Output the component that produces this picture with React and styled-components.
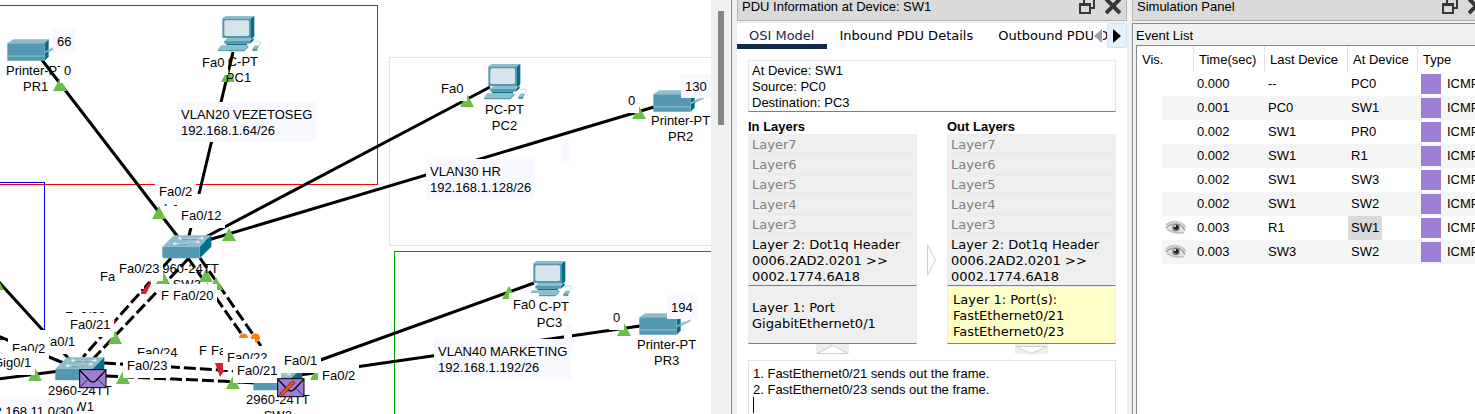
import React from "react";
import styled, { createGlobalStyle, css } from "styled-components";

const GlobalStyle = createGlobalStyle`
  *, *::before, *::after { box-sizing: border-box; }
  body {
    margin: 0;
    overflow: hidden;
    background: #f0f0f0;
    color: #000;
    font: 13px/16px "Liberation Sans", Arial, sans-serif;
  }
  button { font: inherit; color: inherit; border: 0; padding: 0; background: none; }
`;

const wide = css`
  font-family: "DejaVu Sans", Verdana, sans-serif;
`;

const Window = styled.div`
  display: flex;
  height: 100vh;
  overflow: hidden;
`;

/* ---------- Workspace ---------- */

const Workspace = styled.main`
  display: flex;
  flex: 1;
  min-width: 0;
  border-right: 1px solid #84848f;
`;

const Canvas = styled.div`
  position: relative;
  flex: 1;
  min-width: 0;
  overflow: hidden;
  background: #fff;
`;

const Drawing = styled.svg`
  position: absolute;
  left: 0;
  top: 0;
  width: 100%;
  height: 100%;
`;

const Gutter = styled.div`
  width: 20px;
  padding: 11px 7px;
`;

const Thumb = styled.div`
  height: 114px;
  background: #858585;
`;

const Placed = styled.div`
  position: absolute;
  left: ${(p) => p.$x}px;
  top: ${(p) => p.$y}px;
  white-space: pre;
`;

const Caption = styled(Placed)`
  text-align: center;
`;

const Port = styled(Placed)`
  padding: 4px;
  background: #fff;
  height: ${(p) => (p.$h ? `${p.$h}px` : "auto")};
  overflow: hidden;
`;

const Note = styled(Placed)`
  padding: 5px 4px 3px;
  min-height: 24px;
  background: #f8f9ff;
`;

const Sprite = styled.svg`
  position: absolute;
  left: ${(p) => p.$x}px;
  top: ${(p) => p.$y}px;
`;

const solidLinks = [
  [42, 60, 178, 237],
  [233, 52, 188, 240],
  [490, 87, 200, 240],
  [654, 107, 205, 241],
  [534, 283, 290, 371],
  [640, 326, 300, 375],
  [-2, 281, 70, 360],
  [-2, 336, 66, 364],
  [-2, 379, 60, 371],
  [238, 382, 256, 383],
];

const dashedLinks = [
  [171, 258, 83, 357],
  [189, 258, 94, 358],
  [188, 258, 243, 336],
  [200, 258, 261, 346],
  [104, 363, 236, 371],
  [106, 376, 240, 382],
];

const upMarks = [
  [60, 78], [228, 69], [159, 206], [229, 228], [467, 94], [639, 106], [509, 286],
  [624, 323], [-3, 277], [35, 368], [115, 331], [123, 371], [163, 271], [206, 269],
  [216, 277], [233, 376], [317, 367],
];

const captions = [
  [6, 63, "Printer-PT\nPR1"],
  [219, 54, "PC-PT\nPC1"],
  [485, 102, "PC-PT\nPC2"],
  [651, 113, "Printer-PT\nPR2"],
  [530, 299, "PC-PT\nPC3"],
  [637, 337, "Printer-PT\nPR3"],
  [48, 383, "2960-24TT\nSW1"],
  [155, 261, "2960-24TT\nSW3"],
  [246, 392, "2960-24TT\nSW2"],
];

const ports = [
  [60, 59, "0"],
  [198, 51, "Fa0"],
  [437, 77, "Fa0"],
  [624, 89, "0"],
  [509, 293, "Fa0"],
  [609, 306, "0"],
  [160, 196, "Fa0/12", 10],
  [177, 194, " ".repeat(12), 10],
  [155, 180, "Fa0/2"],
  [177, 204, "Fa0/12"],
  [96, 265, "Fa0/24"],
  [115, 257, "Fa0/23"],
  [157, 284, "Fa0/24"],
  [169, 284, "Fa0/20"],
  [61, 305, "Fa0/22"],
  [66, 313, "Fa0/21"],
  [38, 330, "Fa0/1"],
  [8, 337, "Fa0/2"],
  [-11, 351, "Gig0/1"],
  [133, 341, "Fa0/24"],
  [123, 354, "Fa0/23"],
  [195, 339, "Fa0/24"],
  [207, 339, "Fa0/20"],
  [223, 346, "Fa0/22"],
  [233, 359, "Fa0/21"],
  [280, 349, "Fa0/1"],
  [318, 364, "Fa0/2"],
];

const notes = [
  [53, 29, "66"],
  [177, 102, "VLAN20 VEZETOSEG\n192.168.1.64/26"],
  [681, 74, "130"],
  [561, 139, ""],
  [426, 159, "VLAN30 HR\n192.168.1.128/26"],
  [667, 295, "194"],
  [564, 325, ""],
  [434, 339, "VLAN40 MARKETING\n192.168.1.192/26"],
  [-24, 399, "192.168.11.0/30"],
];

const Computer = ({ x, y }) => (
  <Sprite $x={x} $y={y} width="44" height="37" viewBox="0 0 132 111" aria-hidden="true">
    <path d="M16 10 26 3H112L102 10Z" fill="#8fbccb" />
    <path d="M102 10 112 3V63L102 76Z" fill="#046f8a" />
    <path d="M16 10H102V69H16Z" fill="#5599b0" />
    <rect x="22" y="16" width="74" height="47" rx="5" fill="#d5e5eb" />
    <path d="M30 69H104L98 78H22Z" fill="#8fbccb" />
    <path d="M22 78H98V86H22Z" fill="#5599b0" />
    <path d="M98 78 110 69V76L98 86Z" fill="#046f8a" />
    <path d="M28 86H90V91H28Z" fill="#046f8a" />
    <path d="M12 91H94L82 104H3Z" fill="#8fbccb" />
    <path d="M3 104H82V109H3Z M82 104 94 91V97L82 109Z" fill="#5599b0" />
    <path d="M106 102 114 92H126L121 102V108H106Z" fill="#5599b0" />
    <path d="M106 101 114 92H126L118 101Z" fill="#8fbccb" />
    <path d="M110 80Q132 74 130 84T119 91" fill="none" stroke="#c4dde5" strokeWidth="3" />
  </Sprite>
);

const Printer = ({ x, y }) => (
  <Sprite $x={x} $y={y} width="54" height="22" viewBox="0 0 162 66" aria-hidden="true">
    <path d="M112 38 158 18 152 26 112 46Z" fill="#8fbccb" />
    <path d="M1 13 19 1H125L113 13Z" fill="#8fbccb" />
    <path d="M113 13 125 1V53L113 65Z" fill="#046f8a" />
    <path d="M1 13H113V65H1Z" fill="#5599b0" />
    <path d="M1 51H113" stroke="#8fbccb" strokeWidth="3" />
    <path d="M113 38 140 23 134 32 113 43Z" fill="#8fbccb" />
  </Sprite>
);

const Switch = ({ x, y }) => (
  <Sprite $x={x} $y={y} width="50" height="24" viewBox="0 0 150 72" aria-hidden="true">
    <path d="M1 35 36 1H148L113 35Z" fill="#8fbccb" />
    <path d="M113 35 148 1V35L113 70Z" fill="#046f8a" />
    <path d="M1 35H113V70H1Z" fill="#5599b0" />
    <path d="M52 10H60M56 6 50 10 56 14M110 10H124M118 6 124 10 118 14M34 26H46M40 22 34 26 40 30M100 21H112M106 17 112 21 106 25" fill="none" stroke="#f2f8fa" strokeWidth="3" />
    <path d="M62 10H106M48 26H66L80 21H98" fill="none" stroke="#c4dde5" strokeWidth="2" />
    <path d="M62 13H80M50 29H70M88 13H104" stroke="#4a8ca2" strokeWidth="2" />
  </Sprite>
);

const Envelope = ({ x, y, sending }) => (
  <Sprite $x={x} $y={y} width="28" height="20" viewBox="0 0 84 60" aria-hidden="true">
    <rect x="2" y="2" width="79" height="54" fill="#9e7dd4" stroke="#000" strokeWidth="3" />
    <path d="M3 4 33 36Q41 42 50 36L80 4" fill="none" stroke="#000" strokeWidth="4" />
    <path d="M4 54 26 32M80 54 58 32" fill="none" stroke="#000" strokeWidth="2" />
    {sending && <path d="M9 46 47 8 54 14 17 53Z" fill="#ff4b0a" stroke="#222" strokeWidth="2" />}
  </Sprite>
);

const Topology = () => (
  <Canvas>
    <Drawing aria-hidden="true">
      <g fill="none" shapeRendering="crispEdges">
        <rect x="-10" y="5.5" width="387" height="179" stroke="#f00" />
        <path d="M0 182.5H44.5V339.5H0" stroke="#00f" />
        <path d="M2000 57.5H389.5V245.5H2000" stroke="#ff0" />
        <path d="M2000 251.5H394.5V2000" stroke="#00a000" />
      </g>
      <g stroke="#000" strokeWidth="3">
        {solidLinks.map(([a, b, c, d], i) => <line key={i} x1={a} y1={b} x2={c} y2={d} />)}
      </g>
      <g stroke="#000" strokeWidth="3" strokeDasharray="12 4">
        {dashedLinks.map(([a, b, c, d], i) => <line key={i} x1={a} y1={b} x2={c} y2={d} />)}
      </g>
    </Drawing>
    <Computer x={217} y={15} />
    <Computer x={483} y={63} />
    <Computer x={528} y={260} />
    <Printer x={7} y={39} />
    <Printer x={653} y={90} />
    <Printer x={639} y={313} />
    <Switch x={162} y={235} />
    <Switch x={55} y={357} />
    <Switch x={253} y={367} />
    <Drawing aria-hidden="true">
      <g fill="#6bbf47">
        {upMarks.map(([x, y], i) => <path key={i} d={`M${x} ${y}l7 13h-14z`} />)}
      </g>
      <path d="M141 294V292L151 281V284L146 294ZM215 363H229L220 377ZM112 320H116L114 324Z" fill="#d3202f" />
      <path d="M239 338A4.500 4.500 0 0 1 248 338Z" fill="#ff7f0e" />
      <circle cx="255.500" cy="338" r="4.500" fill="#ff7f0e" />
    </Drawing>
    {captions.map(([x, y, text]) => <Caption key={text} $x={x} $y={y}>{text}</Caption>)}
    {ports.map(([x, y, text, h], i) => <Port key={i} $x={x} $y={y} $h={h}>{text}</Port>)}
    {notes.map(([x, y, text], i) => <Note key={i} $x={x} $y={y}>{text}</Note>)}
    <Envelope x={79} y={369} />
    <Envelope x={277} y={378} sending />
  </Canvas>
);

/* ---------- Docked panels ---------- */

const Dock = styled.section`
  display: flex;
  flex-direction: column;
  flex: none;
  width: ${(p) => p.$width}px;
  margin-left: 5px;
  overflow: hidden;
`;

const TitleBar = styled.header`
  display: flex;
  flex: none;
  width: ${(p) => p.$width};
  height: 21px;
  margin-bottom: 2px;
  padding: 0 5px 0 4px;
  background: #dadada;
  border: solid #b4b4b4;
  border-width: 0 1px 1px;
  line-height: 13px;
`;

const Title = styled.h2`
  flex: 1;
  margin: 0;
  font-size: 13px;
  font-weight: 400;
`;

const TitleButton = styled.button`
  width: 16px;
  height: 15px;
  margin-left: 10px;
  svg { display: block; }
`;

const DockTitle = ({ children, width = "auto" }) => (
  <TitleBar $width={width}>
    <Title>{children}</Title>
    <TitleButton aria-label="Float">
      <svg width="16" height="15" fill="none" stroke="#383838" strokeWidth="2">
        <path d="M5 3V0M5-1H15V8H12" />
        <path d="M1 4H11V13H1Z" />
        <path d="M0 5H12" />
      </svg>
    </TitleButton>
    <TitleButton aria-label="Close">
      <svg width="16" height="15" fill="none" stroke="#383838" strokeWidth="4">
        <path d="M1-1 15 13M15-1 1 13" />
      </svg>
    </TitleButton>
  </TitleBar>
);

const PduBody = styled.div`
  display: flex;
  flex-direction: column;
  flex: 1;
  background: #fff;
`;

const TabBar = styled.div`
  display: flex;
  position: relative;
  height: 26px;
  overflow: hidden;
`;

const Tab = styled.button`
  ${wide}
  flex: none;
  height: 26px;
  padding: 5px 13px 0 12px;
  white-space: nowrap;
  color: ${(p) => (p.$active ? "#14284b" : "#000")};
  border-bottom: 5px solid ${(p) => (p.$active ? "#14284b" : "transparent")};
`;

const TabScroll = styled.div`
  position: absolute;
  top: 0;
  right: 0;
  display: flex;
  gap: 4px;
`;

const ScrollButton = styled.button`
  display: grid;
  place-items: center;
  width: ${(p) => (p.$hot ? 20 : 10)}px;
  height: 25px;
  background: ${(p) => (p.$hot ? "#e5f1fb" : "#fff")};
  border: ${(p) => (p.$hot ? "1px solid #cce4f7" : "0")};
  border-radius: 2px;
`;

const PduContent = styled.div`
  display: flex;
  flex-direction: column;
  flex: 1;
  padding: 11px 11px 0;
`;

const Summary = styled.div`
  height: 52px;
  padding: 2px 3px 0;
  border: 1px solid #e5e5e5;
  border-bottom-color: #7f7f7f;
`;

const Layers = styled.div`
  display: grid;
  grid-template-columns: 1fr 30px 1fr;
  margin-top: 6px;
`;

const Stack = styled.div`
  display: flex;
  flex-direction: column;
`;

const StackTitle = styled.h3`
  margin: 0;
  height: 16px;
  font-size: 13px;
  line-height: 18px;
`;

const Layer = styled.button`
  ${wide}
  display: flex;
  align-items: center;
  height: ${(p) => p.$h}px;
  padding: 2px ${(p) => (p.$lit ? 5 : 3)}px 0;
  text-align: left;
  white-space: pre;
  color: ${(p) => (p.$idle ? "#808080" : "#000")};
  background: ${(p) => (p.$lit ? "#ffffc8" : "#efefef")};
  border: 1px solid #ebebeb;
  border-bottom-color: ${(p) => (p.$idle ? "#ebebeb" : "#7f7f7f")};
`;

const Across = styled.button`
  align-self: end;
  justify-self: center;
  width: 12px;
  height: 34px;
  margin-bottom: 77px;
`;

const StepButton = styled.button`
  align-self: center;
  width: 33px;
  height: 10px;
  background: #efefef;
  svg { display: block; }
`;

const LogBox = styled.div`
  position: relative;
  display: flex;
  flex: 1;
  margin-top: 6px;
`;

const Log = styled.textarea`
  flex: 1;
  padding: 5px 4px 0;
  border: 1px solid #dfe4ea;
  border-bottom: 0;
  background: #fff;
  font: inherit;
  resize: none;
  outline: 0;
  overflow: hidden;
`;

const Caret = styled.span`
  position: absolute;
  left: 5px;
  top: 37px;
  width: 1px;
  height: 16px;
  background: #000;
`;

const idleLayers = ["Layer7", "Layer6", "Layer5", "Layer4", "Layer3"];
const layer2 = "Layer 2: Dot1q Header\n0006.2AD2.0201 >>\n0002.1774.6A18";

const LayerStack = ({ title, port, lit, step, arrow }) => (
  <Stack>
    <StackTitle>{title}</StackTitle>
    {idleLayers.map((name) => <Layer key={name} $h={20} $idle>{name}</Layer>)}
    <Layer $h={52}>{layer2}</Layer>
    <Layer $h={58} $lit={lit}>{port}</Layer>
    <StepButton aria-label={step}>
      <svg width="33" height="10" fill="#fff" stroke="#d0d0d0">
        <path d={arrow} />
      </svg>
    </StepButton>
  </Stack>
);

const PduPanel = () => (
  <Dock $width={390}>
    <DockTitle>PDU Information at Device: SW1</DockTitle>
    <PduBody>
      <TabBar>
        <Tab $active>OSI Model</Tab>
        <Tab>Inbound PDU Details</Tab>
        <Tab>Outbound PDU Details</Tab>
        <TabScroll>
          <ScrollButton aria-label="Previous tabs">
            <svg width="8" height="14"><path d="M8 0V14L0 7Z" fill="#a0a0a0" /></svg>
          </ScrollButton>
          <ScrollButton $hot aria-label="Next tabs">
            <svg width="8" height="14"><path d="M0 0V14L8 7Z" fill="#000" /></svg>
          </ScrollButton>
        </TabScroll>
      </TabBar>
      <PduContent>
        <Summary>At Device: SW1<br />Source: PC0<br />Destination: PC3</Summary>
        <Layers>
          <LayerStack title="In Layers" port={"Layer 1: Port\nGigabitEthernet0/1"} step="Previous layer" arrow="M1 9.500 16.500 1.500 32 9.500Z" />
          <Across aria-label="Compare">
            <svg width="12" height="34" fill="none" stroke="#d0d0d0">
              <path d="M1.500 1.500V32.500L9.500 17Z" />
            </svg>
          </Across>
          <LayerStack title="Out Layers" port={"Layer 1: Port(s):\nFastEthernet0/21\nFastEthernet0/23"} lit step="Next layer" arrow="M1 2.500 16.500 9.500 32 2.500Z" />
        </Layers>
        <LogBox>
          <Log
            aria-label="Layer details"
            readOnly
            value={"1. FastEthernet0/21 sends out the frame.\n2. FastEthernet0/23 sends out the frame.\n"}
          />
          <Caret />
        </LogBox>
      </PduContent>
    </PduBody>
  </Dock>
);

const Group = styled.div`
  flex: 1;
  padding: 3px 0 0 3px;
  border: solid #8a8a8a;
  border-width: 1px 0 0 1px;
`;

const GroupTitle = styled.h3`
  margin: 0;
  height: 18px;
  line-height: 17px;
  font-size: 13px;
  font-weight: 400;
`;

const List = styled.div`
  height: 100%;
  background: #fff;
  border: solid #828790;
  border-width: 1px 0 0 1px;
`;

const Events = styled.table`
  width: 100%;
  table-layout: fixed;
  border-collapse: separate;
  border-spacing: 0;
`;

const Head = styled.th`
  width: ${(p) => p.$w};
  height: 26px;
  padding: 2px 0 0 5px;
  font-weight: 400;
  text-align: left;
  white-space: nowrap;
  border-right: 1px solid #e2e2e2;
  &:last-child { border-right: 0; }
`;

const Row = styled.tr`
  --stripe: #fff;
  &:nth-child(even) { --stripe: #f5f5f5; }
`;

const Cell = styled.td`
  height: 24px;
  padding: 0 0 0 ${(p) => (p.$picked ? 0 : 3)}px;
  background: var(--stripe);
  white-space: nowrap;
`;

const VisCell = styled(Cell)`
  padding: 0 0 0 25px;
  background: #fff;
`;

const Vis = styled.div`
  display: flex;
  align-items: center;
  height: 24px;
  padding-left: 3px;
  background: var(--stripe);
`;

const Picked = styled.span`
  display: block;
  width: fit-content;
  height: 24px;
  line-height: 24px;
  padding: 0 3px;
  border-radius: 2px;
  background: #d9d9d9;
`;

const TypeTag = styled.span`
  display: flex;
  align-items: center;
  gap: 6px;
  &::before {
    content: "";
    flex: none;
    width: 20px;
    height: 20px;
    background: #9e7dd4;
  }
`;

const Eye = () => (
  <svg width="21" height="16" viewBox="0 0 63 48" role="img" aria-label="Visible">
    <path d="M2 22Q14 4 34 8T61 26L56 40Q30 46 14 36Z" fill="#e2e2e2" />
    <path d="M2 15Q20 2 38 6T62 22" fill="none" stroke="#c4c4c4" strokeWidth="5" />
    <path d="M2 24Q18 10 36 12T59 32" fill="none" stroke="#999" strokeWidth="4" />
    <path d="M6 28Q24 42 58 38" fill="none" stroke="#bbb" strokeWidth="4" />
    <circle cx="33" cy="23" r="11" fill="#777" />
    <circle cx="34" cy="22" r="7" fill="#222" />
    <circle cx="30" cy="18" r="3" fill="#fff" />
  </svg>
);

const events = [
  ["0.000", "--", "PC0"],
  ["0.001", "PC0", "SW1"],
  ["0.002", "SW1", "PR0"],
  ["0.002", "SW1", "R1"],
  ["0.002", "SW1", "SW3"],
  ["0.002", "SW1", "SW2"],
  ["0.003", "R1", "SW1", true, true],
  ["0.003", "SW3", "SW2", true],
];

const SimulationPanel = () => (
  <Dock $width={343}>
    <DockTitle width="358px">Simulation Panel</DockTitle>
    <Group>
      <GroupTitle>Event List</GroupTitle>
      <List>
        <Events>
          <thead>
            <tr>
              <Head $w="57px">Vis.</Head>
              <Head $w="71px">Time(sec)</Head>
              <Head $w="83px">Last Device</Head>
              <Head $w="70px">At Device</Head>
              <Head $w="auto">Type</Head>
            </tr>
          </thead>
          <tbody>
            {events.map(([time, last, at, visible, picked], i) => (
              <Row key={i}>
                <VisCell><Vis>{visible && <Eye />}</Vis></VisCell>
                <Cell>{time}</Cell>
                <Cell>{last}</Cell>
                <Cell $picked={picked}>{picked ? <Picked>{at}</Picked> : at}</Cell>
                <Cell><TypeTag>ICMP</TypeTag></Cell>
              </Row>
            ))}
          </tbody>
        </Events>
      </List>
    </Group>
  </Dock>
);

export default function App() {
  return (
    <Window>
      <GlobalStyle />
      <Workspace>
        <Topology />
        <Gutter><Thumb /></Gutter>
      </Workspace>
      <PduPanel />
      <SimulationPanel />
    </Window>
  );
}
